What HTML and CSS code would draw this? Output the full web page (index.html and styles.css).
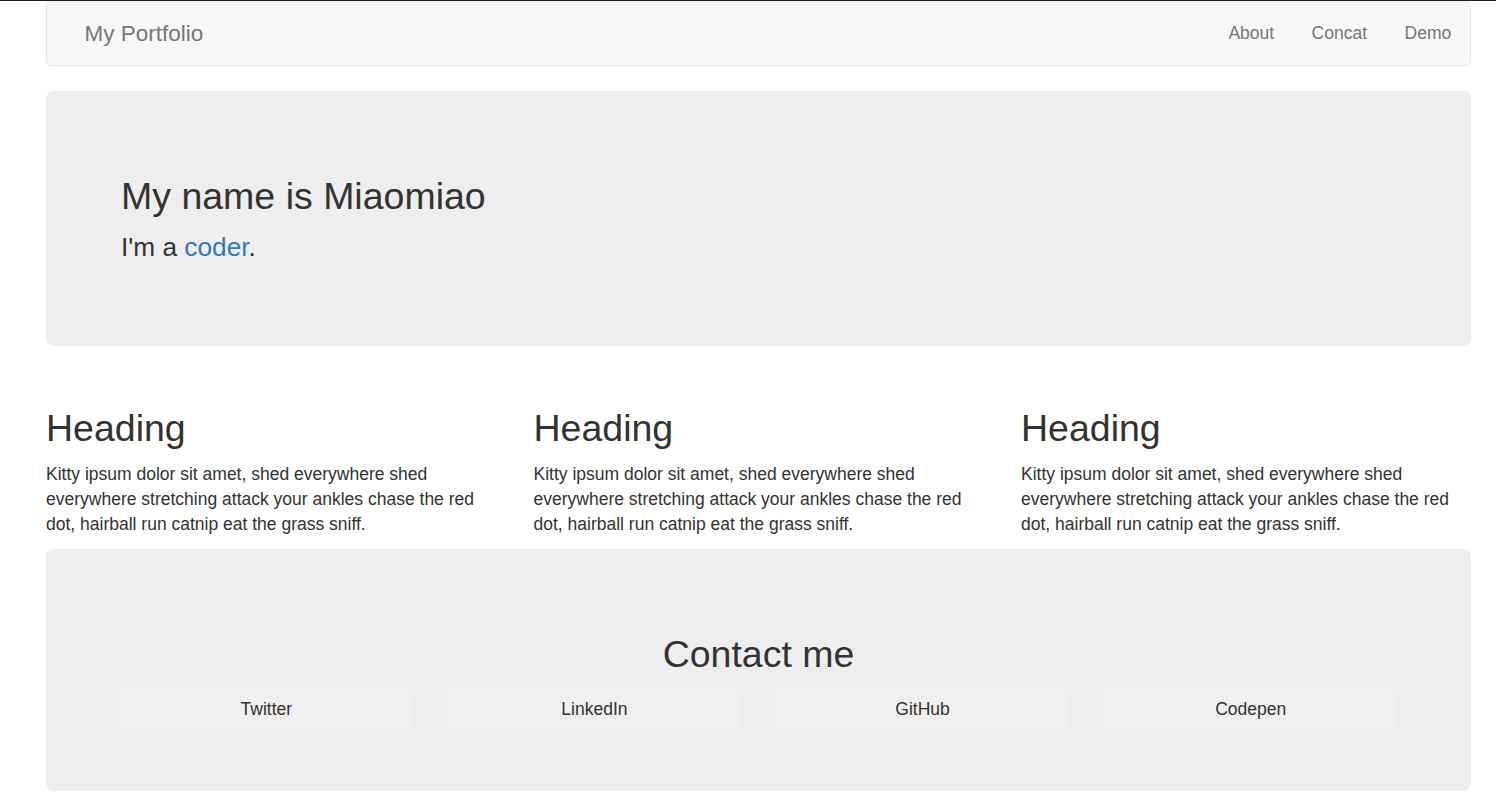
FILE: index.html
```html
<!DOCTYPE html>
<html lang="en">
<head>
<meta charset="utf-8">
<title>My Portfolio</title>
<link rel="stylesheet" href="styles.css">
</head>
<body>
<div class="container">
  <nav class="navbar">
    <a class="brand" href="#">My Portfolio</a>
    <ul class="nav">
      <li><a href="#">About</a></li>
      <li><a href="#">Concat</a></li>
      <li><a href="#">Demo</a></li>
    </ul>
  </nav>

  <section class="jumbotron hero">
    <h1>My name is Miaomiao</h1>
    <p class="lead">I'm a <a href="#">coder</a>.</p>
  </section>

  <section class="cols">
    <div class="col">
      <h2>Heading</h2>
      <p>Kitty ipsum dolor sit amet, shed everywhere shed everywhere stretching attack your ankles chase the red dot, hairball run catnip eat the grass sniff.</p>
    </div>
    <div class="col">
      <h2>Heading</h2>
      <p>Kitty ipsum dolor sit amet, shed everywhere shed everywhere stretching attack your ankles chase the red dot, hairball run catnip eat the grass sniff.</p>
    </div>
    <div class="col">
      <h2>Heading</h2>
      <p>Kitty ipsum dolor sit amet, shed everywhere shed everywhere stretching attack your ankles chase the red dot, hairball run catnip eat the grass sniff.</p>
    </div>
  </section>

  <section class="jumbotron contact">
    <h1>Contact me</h1>
    <div class="buttons">
      <a class="btn" href="#">Twitter</a>
      <a class="btn" href="#">LinkedIn</a>
      <a class="btn" href="#">GitHub</a>
      <a class="btn" href="#">Codepen</a>
    </div>
  </section>
</div>
</body>
</html>
```

FILE: styles.css
```css
* { box-sizing: border-box; }

html, body {
  margin: 0;
  padding: 0;
  background: #fff;
}

body {
  border-top: 1px solid #1e1e2a;
  font-family: "Liberation Sans", Arial, sans-serif;
  font-size: 17.5px;
  line-height: 25px;
  color: #333;
}

a { text-decoration: none; }

.container {
  margin-left: 46px;
  width: 1425px;
}

/* Navbar */
.navbar {
  display: flex;
  justify-content: space-between;
  align-items: stretch;
  height: 64.5px;
  background: #f8f8f8;
  border: 1px solid #e7e7e7;
  border-radius: 5px;
  margin-bottom: 25px;
}

.brand {
  margin-left: 18.75px;
  padding: 18.75px;
  font-size: 22.5px;
  line-height: 25px;
  color: #777;
}

.nav {
  display: flex;
  list-style: none;
  margin: 0;
  padding: 0;
}

.nav a {
  display: block;
  padding: 18.75px;
  font-size: 17.5px;
  line-height: 25px;
  color: #777;
}

/* Jumbotron */
.jumbotron {
  background: #eee;
  border-radius: 7.5px;
  padding: 60px 75px;
  margin-bottom: 37.5px;
}

h1, h2 {
  font-family: "Liberation Sans", Arial, sans-serif;
  font-weight: 500;
  font-size: 37.5px;
  line-height: 1.1;
  margin: 25px 0 12.5px;
  color: #333;
}

.lead {
  font-size: 26.25px;
  line-height: 37.5px;
  margin: 0 0 18.75px;
}

.lead a { color: #337ab7; }

/* Columns */
.cols {
  display: grid;
  grid-template-columns: repeat(3, 1fr);
  column-gap: 37.5px;
}

.col p {
  margin: 0 0 12.5px;
}

/* Contact */
.contact {
  text-align: center;
}

.buttons {
  display: grid;
  grid-template-columns: repeat(4, 1fr);
  column-gap: 37.5px;
}

.btn {
  display: block;
  height: 42.5px;
  padding: 8.75px 15px;
  line-height: 25px;
  font-size: 17.5px;
  color: #333;
  background: #f0f0f0;
  border-radius: 5px;
  text-align: center;
}
```
